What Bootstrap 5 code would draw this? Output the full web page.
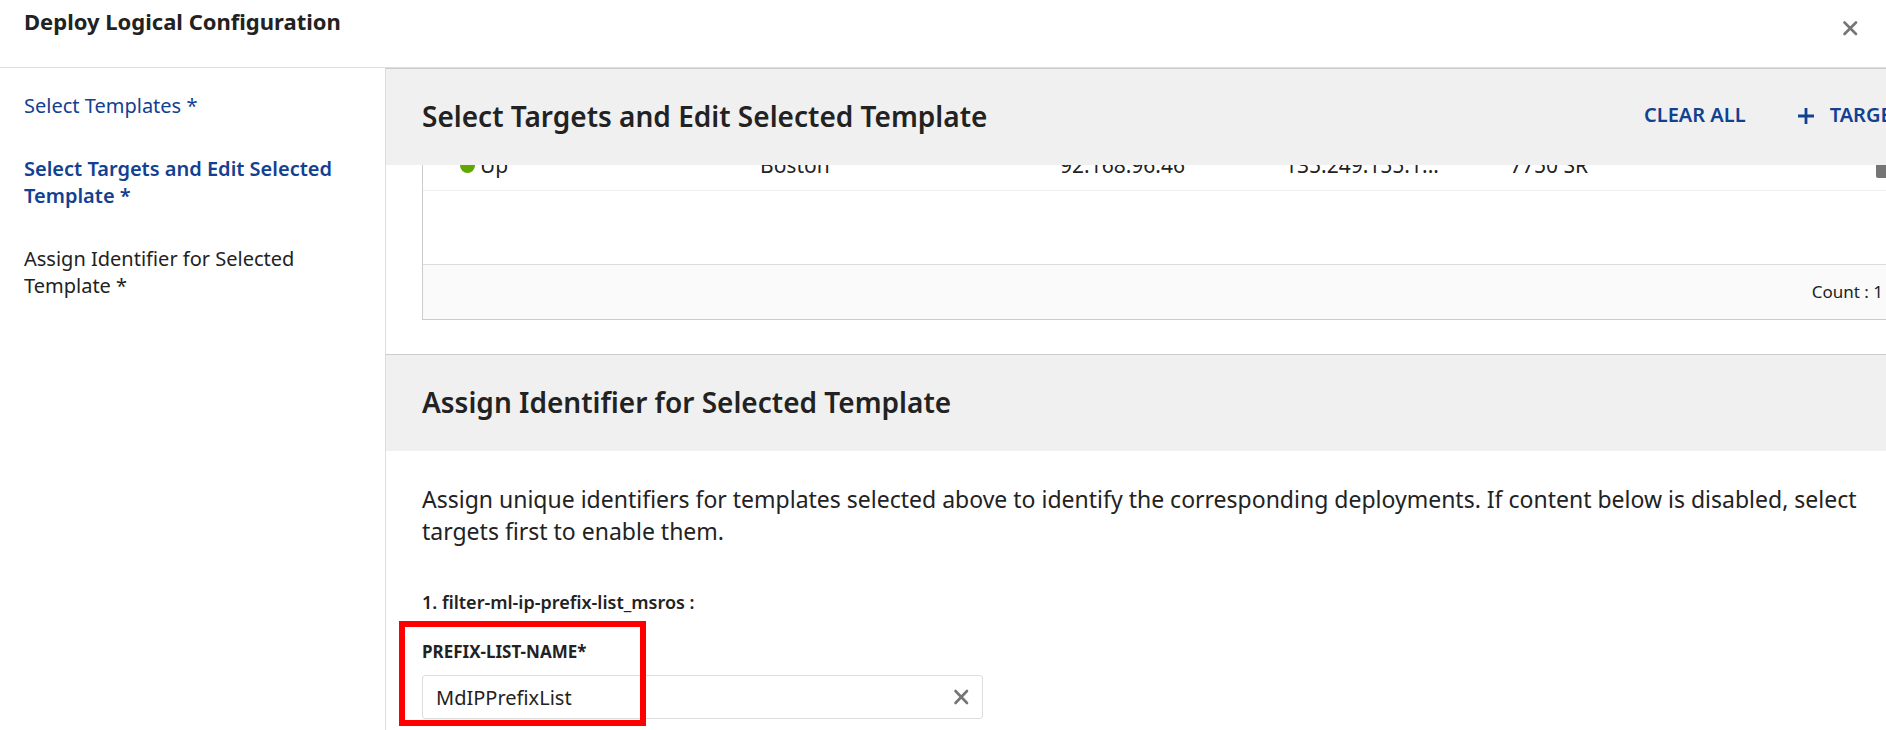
<!DOCTYPE html>
<html lang="en">
<head>
<meta charset="utf-8">
<meta name="viewport" content="width=device-width, initial-scale=1">
<title>Deploy Logical Configuration</title>
<link href="https://cdn.jsdelivr.net/npm/bootstrap@5.3.0/dist/css/bootstrap.min.css" rel="stylesheet">
<style>
  body { font-family: "Noto Sans", "Open Sans", sans-serif; color: #222; font-size: 20px; line-height: 27px; }
  .app { height: 100vh; overflow: hidden; }
  .app-header { height: 68px; border-bottom: 1px solid #ddd; padding: 7px 24px; }
  .app-title { font-size: 22px; line-height: 28px; font-weight: 700; }
  .icon-btn { border: 0; background: none; padding: 0; line-height: 0; color: #757575; }
  .steps { width: 386px; border-right: 1px solid #ddd; padding: 24px 44px 24px 24px; }
  .steps ul { gap: 36px; }
  .steps a { color: #222; text-decoration: none; display: block; }
  .steps a.done { color: #124191; }
  .steps a.current { color: #124191; font-weight: 600; }
  .content { min-width: 0; overflow: hidden; }
  .wide { margin-right: -64px; }
  .section-head { height: 97px; background: #f0f0f0; border-top: 1px solid #ccc; padding: 0 36px 2px; }
  .section-head h2 { font-size: 28px; line-height: 36px; font-weight: 600; margin: 0; }
  .actions { gap: 52px; padding-bottom: 3px; }
  .action { border: 0; background: none; padding: 0; color: #124191; font-weight: 600; gap: 16px; }
  .viewport-rows { height: 155px; margin: 0 0 34px 36px; overflow: hidden; }
  .grid-box { border: 1px solid #ccc; }
  .grid-table { width: 100%; table-layout: fixed; font-size: 21px; }
  .grid-table td { height: 50px; padding: 0; border-bottom: 1px solid #eee; white-space: nowrap; }
  .status { gap: 5px; padding-left: 37px; }
  .dot { width: 15px; height: 15px; border-radius: 50%; background: #60a800; }
  .grid-space { height: 73px; }
  .grid-foot { height: 55px; border-top: 1px solid #ddd; background: #fafafa; font-size: 17px; padding: 0 66px 2px 0; }
  .form-part { padding: 32px 24px 0 36px; }
  .intro { font-size: 23px; line-height: 32px; margin-bottom: 43px; }
  .item-name { font-size: 18px; line-height: 24px; font-weight: 600; margin-bottom: 26px; }
  .field-label { font-size: 17px; line-height: 24px; font-weight: 700; margin-bottom: 11px; }
  .field { width: 561px; }
  .field-box { height: 44px; border: 1px solid #ddd; border-radius: 3px; padding: 0 13px; }
  .field-box input { border: 0; outline: 0; padding: 0; color: #222; min-width: 0; }
  .highlight { position: absolute; left: -23px; top: -19px; width: 247px; height: 105px; border: 6px solid #f00; pointer-events: none; }
</style>
</head>
<body>
<div class="app d-flex flex-column">
  <header class="app-header d-flex justify-content-between flex-shrink-0">
    <h1 class="app-title m-0">Deploy Logical Configuration</h1>
    <button class="icon-btn align-self-start pt-2 mt-1 pe-1" type="button" aria-label="Close">
      <svg width="16" height="18" viewBox="0 0 16 18" fill="none" stroke="currentColor" stroke-width="2.6" stroke-linecap="round"><path d="M2.500 3.500L14 15M14 3.500L2.500 15"/></svg>
    </button>
  </header>
  <div class="d-flex flex-grow-1">
    <nav class="steps flex-shrink-0" aria-label="Steps">
      <ul class="list-unstyled d-flex flex-column m-0">
        <li><a class="done" href="#templates">Select Templates *</a></li>
        <li><a class="current" href="#targets">Select Targets and Edit Selected Template *</a></li>
        <li><a href="#identifier">Assign Identifier for Selected Template *</a></li>
      </ul>
    </nav>
    <main class="content flex-grow-1">
      <section id="targets" class="wide">
        <div class="section-head d-flex align-items-center justify-content-between">
          <h2>Select Targets and Edit Selected Template</h2>
          <div class="actions d-flex">
            <button class="action" type="button">CLEAR ALL</button>
            <button class="action d-flex align-items-center" type="button">
              <svg width="16" height="18" viewBox="0 0 16 18" fill="none" stroke="currentColor" stroke-width="2.8"><path d="M8 2V18M0 10H16"/></svg>
              TARGETS
            </button>
          </div>
        </div>
        <div class="viewport-rows d-flex flex-column justify-content-end">
          <div class="grid-box">
            <table class="grid-table">
              <colgroup><col style="width:337px"><col style="width:300px"><col style="width:225px"><col style="width:225px"><col style="width:366px"><col></colgroup>
              <tbody><tr>
                <td><span class="status d-flex align-items-center"><span class="dot"></span>Up</span></td>
                <td>Boston</td>
                <td>92.168.96.46</td>
                <td>135.249.155.1...</td>
                <td>7750 SR</td>
                <td><svg width="22" height="22" viewBox="0 0 22 22" fill="#757575"><rect width="22" height="22" rx="2"/></svg></td>
              </tr></tbody>
            </table>
            <div class="grid-space"></div>
            <div class="grid-foot d-flex align-items-center justify-content-end">Count : 1</div>
          </div>
        </div>
      </section>
      <section id="identifier">
        <div class="section-head d-flex align-items-center">
          <h2>Assign Identifier for Selected Template</h2>
        </div>
        <form class="form-part">
          <p class="intro">Assign unique identifiers for templates selected above to identify the corresponding deployments. If content below is disabled, select targets first to enable them.</p>
          <div class="item-name">1. filter-ml-ip-prefix-list_msros :</div>
          <div class="field position-relative">
            <label class="field-label d-block" for="prefix">PREFIX-LIST-NAME*</label>
            <div class="field-box d-flex align-items-center">
              <input id="prefix" class="flex-grow-1" type="text" value="MdIPPrefixList">
              <button class="icon-btn" type="button" aria-label="Clear">
                <svg width="16" height="16" viewBox="0 0 16 16" fill="none" stroke="currentColor" stroke-width="2.6" stroke-linecap="round"><path d="M2.500 2L14 14M14 2L2.500 14"/></svg>
              </button>
            </div>
            <div class="highlight"></div>
          </div>
        </form>
      </section>
    </main>
  </div>
</div>
<script src="https://cdn.jsdelivr.net/npm/bootstrap@5.3.0/dist/js/bootstrap.bundle.min.js"></script>
</body>
</html>
